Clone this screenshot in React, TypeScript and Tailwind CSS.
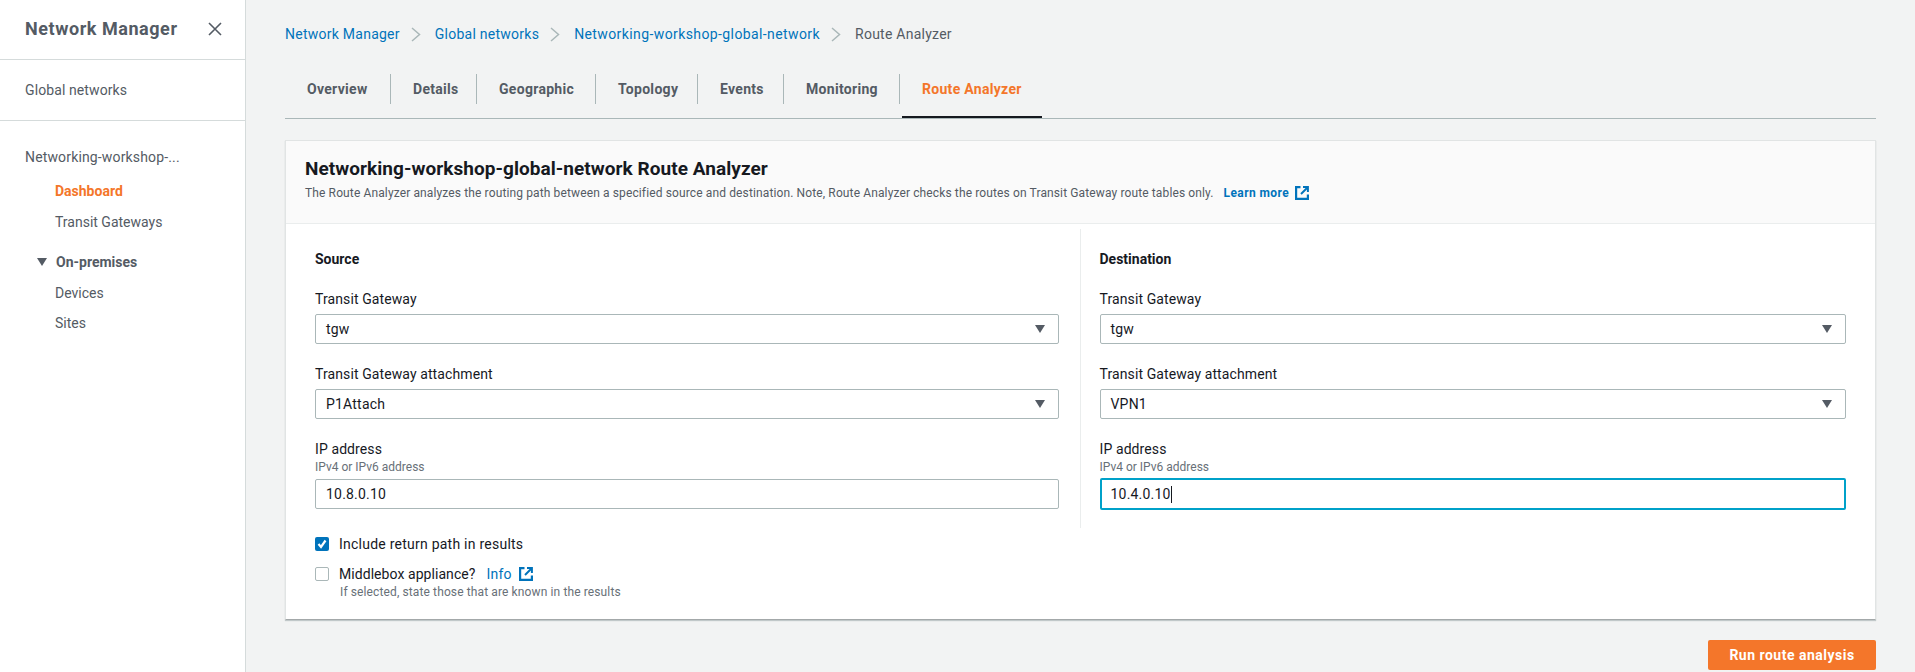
const sans = "font-['Roboto','Liberation_Sans',sans-serif]"

const ExternalIcon = () => (
  <svg width="14" height="14" viewBox="0 0 14 14" fill="none" stroke="#0073bb" strokeWidth="2.2" className="shrink-0">
    <path d="M5.5 1.1H1.1v11.8h11.8V8.5" />
    <path d="M8 1.1h4.9V6" strokeWidth="2" />
    <path d="M12.5 1.5 6 8" strokeWidth="2" />
  </svg>
)

const Chevron = () => (
  <svg width="10" height="15" viewBox="0 0 10 15" fill="none" stroke="#aab7b8" strokeWidth="1.5" className="shrink-0 ml-[11px] mr-[14px]">
    <path d="M1 1l7.5 6.5L1 14" />
  </svg>
)

const Caret = ({ className = "" }: { className?: string }) => (
  <svg width="10" height="8" viewBox="0 0 10 8" fill="#545b64" className={className}>
    <path d="M0 0h10L5 8z" />
  </svg>
)

const tabs = [
  { name: "Overview", w: "w-[106px]" },
  { name: "Details", w: "w-[86px]" },
  { name: "Geographic", w: "w-[119px]" },
  { name: "Topology", w: "w-[102px]" },
  { name: "Events", w: "w-[86px]" },
  { name: "Monitoring", w: "w-[116px]" },
]

const Select = ({ value }: { value: string }) => (
  <div className="flex items-center justify-between h-[30px] mt-[5px] pl-[10px] pr-[13px] bg-white border border-[#aab7b8] rounded-[2px]">
    <span className="text-[14px] tracking-[0.2px] text-[#16191f]">{value}</span>
    <Caret />
  </div>
)

const Label = ({ children }: { children: string }) => (
  <p className="mt-5 text-[14px] leading-5 tracking-[0.1px] text-[#16191f]">{children}</p>
)

const Column = ({ title, attachment, ip, focused, className }: { title: string; attachment: string; ip: string; focused?: boolean; className: string }) => (
  <div className={className}>
    <h3 className="pt-5 text-[14px] leading-5 font-bold text-[#16191f]">{title}</h3>
    <Label>Transit Gateway</Label>
    <Select value="tgw" />
    <Label>Transit Gateway attachment</Label>
    <Select value={attachment} />
    <Label>IP address</Label>
    <p className="text-[12px] leading-4 text-[#687078]">IPv4 or IPv6 address</p>
    {focused ? (
      <div className="flex items-center h-[32px] mt-[3px] pl-[9px] bg-white border-2 border-[#00a1c9] rounded-[2px]">
        <span className="text-[14px] tracking-[0.2px] text-[#16191f]">{ip}</span>
        <span className="w-px h-[17px] bg-[#16191f]" />
      </div>
    ) : (
      <div className="flex items-center h-[30px] mt-1 pl-[10px] bg-white border border-[#aab7b8] rounded-[2px]">
        <span className="text-[14px] tracking-[0.2px] text-[#16191f]">{ip}</span>
      </div>
    )}
  </div>
)

export default function App() {
  return (
    <div className={`flex w-[1915px] h-[672px] overflow-hidden bg-[#f2f3f3] ${sans}`}>
      <aside className="w-[246px] shrink-0 bg-white border-r border-[#d5dbdb]">
        <div className="flex items-center justify-between h-[60px] pl-[25px] pr-[23px] pb-[2px] border-b border-[#d5dbdb]">
          <h2 className="text-[18px] tracking-[0.55px] font-bold text-[#545b64]">Network Manager</h2>
          <svg width="14" height="14" viewBox="0 0 14 14" stroke="#545b64" strokeWidth="1.6" fill="none">
            <path d="M1 1l12 12M13 1L1 13" />
          </svg>
        </div>
        <div className="flex items-center h-[61px] pl-[25px] border-b border-[#d5dbdb] text-[14px] tracking-[0.1px] text-[#545b64]">Global networks</div>
        <nav className="pl-[25px] text-[14px] text-[#545b64]">
          <p className="mt-[26px] leading-5 tracking-[0.15px]">Networking-workshop-...</p>
          <p className="mt-[14px] ml-[30px] leading-5 font-bold text-[#f4762a]">Dashboard</p>
          <p className="mt-[11px] ml-[30px] leading-5">Transit Gateways</p>
          <div className="flex items-center mt-5 ml-3 leading-5 font-bold">
            <Caret />
            <span className="ml-[9px]">On-premises</span>
          </div>
          <p className="mt-[11px] ml-[30px] leading-5">Devices</p>
          <p className="mt-[10px] ml-[30px] leading-5">Sites</p>
        </nav>
      </aside>

      <main className="flex-1 pl-[39px] pr-[39px]">
        <div className="flex items-center h-5 mt-6 text-[14px] tracking-[0.25px]">
          <a className="text-[#0073bb]">Network Manager</a>
          <Chevron />
          <a className="text-[#0073bb]">Global networks</a>
          <Chevron />
          <a className="tracking-[0.4px] text-[#0073bb]">Networking-workshop-global-network</a>
          <Chevron />
          <span className="text-[#545b64]">Route Analyzer</span>
        </div>

        <div className="flex items-stretch h-[30px] mt-[30px] pb-[14px] border-b border-[#aab7b8] box-content -mb-px">
          {tabs.map((tab) => (
            <div key={tab.name} className={`flex items-center pl-[22px] border-r border-[#aab7b8] text-[14px] tracking-[0.3px] font-bold text-[#545b64] ${tab.w}`}>
              {tab.name}
            </div>
          ))}
          <div className="relative flex items-center pl-[22px] text-[14px] tracking-[0.3px] font-bold text-[#f4762a]">
            Route Analyzer
            <span className="absolute left-[2px] w-[140px] -bottom-[14px] h-[2px] bg-[#16191f]" />
          </div>
        </div>

        <section className="mt-[22px] bg-white border border-[#e1e4e4] border-b-[#a3a8a9] shadow-[0_1px_1px_rgba(0,28,36,0.2)]">
          <header className="h-[83px] pl-[19px] pt-[17px] bg-[#fafafa] border-b border-[#eaeded]">
            <h1 className="text-[19px] leading-[22px] tracking-[0.05px] font-bold text-[#16191f]">Networking-workshop-global-network Route Analyzer</h1>
            <p className="flex items-center mt-[5px] text-[12px] leading-4 tracking-[0.125px] text-[#545b64]">
              The Route Analyzer analyzes the routing path between a specified source and destination. Note, Route Analyzer checks the routes on Transit Gateway route tables only.
              <a className="ml-[10px] mr-[6px] font-bold tracking-[0.4px] text-[#0073bb]">Learn more</a>
              <ExternalIcon />
            </p>
          </header>
          <div className="grid grid-cols-2 mt-[5px]">
            <Column title="Source" attachment="P1Attach" ip="10.8.0.10" className="pl-[29px] pr-[21px] pb-[19px] border-r border-[#eaeded]" />
            <Column title="Destination" attachment="VPN1" ip="10.4.0.10" focused className="pl-[19px] pr-[29px]" />
          </div>
          <div className="pl-[29px] pb-[19px]">
            <div className="flex items-center h-5 mt-[6px] gap-[10px]">
              <span className="flex items-center justify-center w-[14px] h-[14px] rounded-[2px] bg-[#0073bb]">
                <svg width="10" height="10" viewBox="0 0 10 10" fill="none" stroke="white" strokeWidth="2.2">
                  <path d="M1.5 5l2.5 3L8.5 1.5" />
                </svg>
              </span>
              <span className="text-[14px] tracking-[0.24px] text-[#16191f]">Include return path in results</span>
            </div>
            <div className="flex items-center h-5 mt-[10px] gap-[10px]">
              <span className="w-[14px] h-[14px] rounded-[2px] bg-white border border-[#aab7b8]" />
              <span className="text-[14px] tracking-[0.06px] text-[#16191f]">Middlebox appliance?</span>
              <a className="ml-[1px] -mr-[3px] text-[14px] tracking-[0.24px] text-[#0073bb]">Info</a>
              <ExternalIcon />
            </div>
            <p className="ml-[25px] text-[12px] leading-4 tracking-[0.12px] text-[#687078]">If selected, state those that are known in the results</p>
          </div>
        </section>

        <div className="flex justify-end mt-5">
          <button className="w-[168px] h-[30px] rounded-[2px] bg-[#f4762a] text-[14px] tracking-[0.5px] font-bold text-white">Run route analysis</button>
        </div>
      </main>
    </div>
  )
}
